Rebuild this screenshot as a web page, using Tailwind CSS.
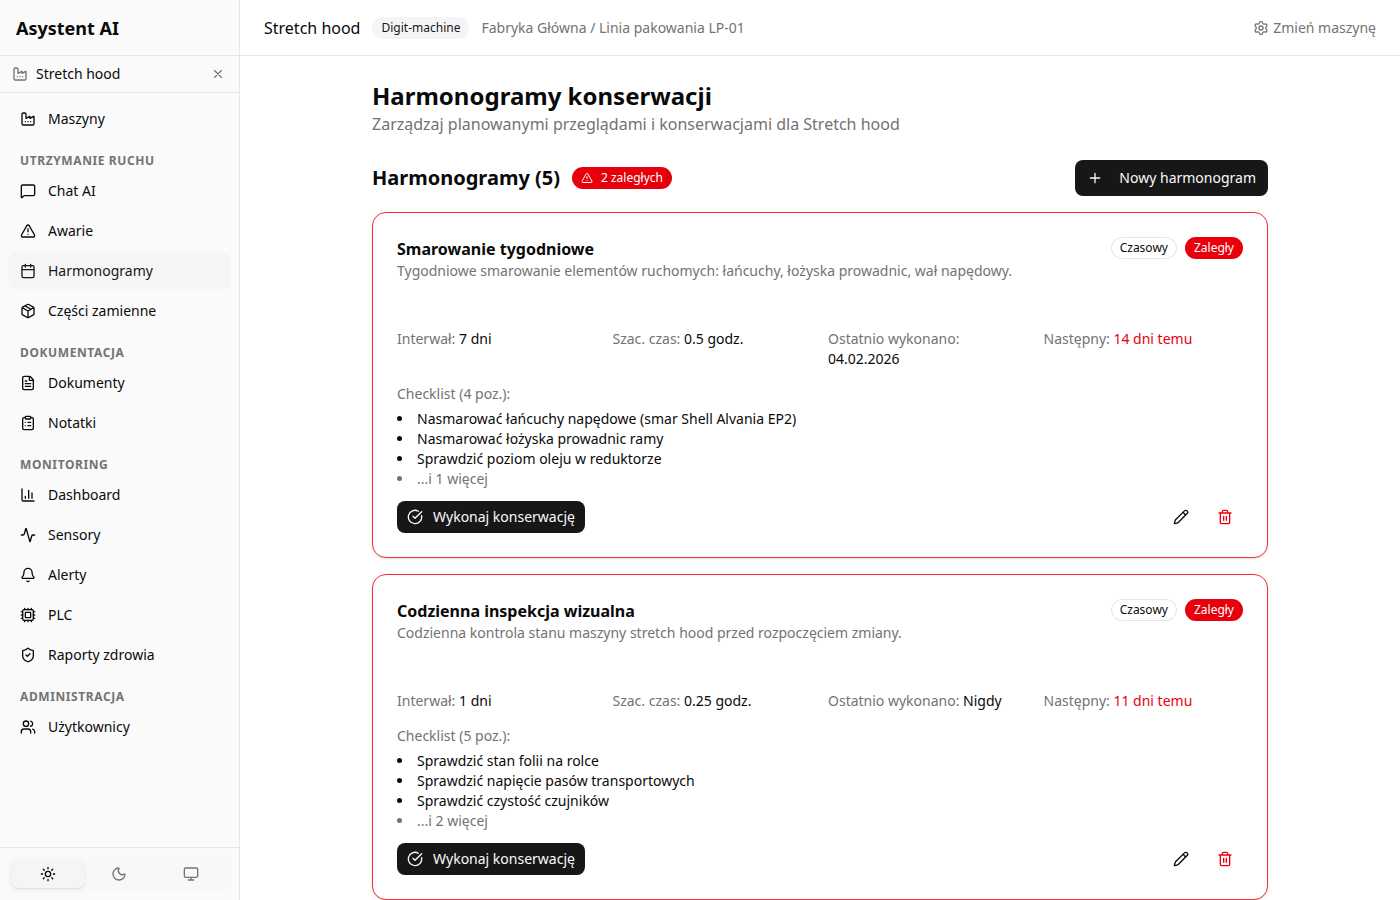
<!DOCTYPE html>
<html lang="pl">
<head>
    <meta charset="UTF-8">
    <meta name="viewport" content="width=device-width, initial-scale=1.0">
    <title>Asystent AI - Harmonogramy</title>
    <script src="https://cdn.jsdelivr.net/npm/@tailwindcss/browser@4"></script>
</head>
<body class="bg-white text-neutral-950 font-['Noto_Sans',sans-serif]">

    <!-- Icon sprite -->
    <svg class="hidden">
        <symbol id="factory" viewBox="0 0 24 24"><path d="M12 16h.01M16 16h.01M8 16h.01M3 19a2 2 0 0 0 2 2h14a2 2 0 0 0 2-2V8.5a.5.5 0 0 0-.769-.422l-4.462 2.844A.5.5 0 0 1 15 10.5v-2a.5.5 0 0 0-.769-.422L9.77 10.922A.5.5 0 0 1 9 10.5V5a2 2 0 0 0-2-2H5a2 2 0 0 0-2 2z"/></symbol>
        <symbol id="x" viewBox="0 0 24 24"><path d="M18 6 6 18M6 6l12 12"/></symbol>
        <symbol id="message" viewBox="0 0 24 24"><path d="M22 17a2 2 0 0 1-2 2H6.828a2 2 0 0 0-1.414.586l-2.202 2.202A.71.71 0 0 1 2 21.286V5a2 2 0 0 1 2-2h16a2 2 0 0 1 2 2z"/></symbol>
        <symbol id="alert" viewBox="0 0 24 24"><path d="m21.73 18-8-14a2 2 0 0 0-3.48 0l-8 14A2 2 0 0 0 4 21h16a2 2 0 0 0 1.73-3M12 9v4M12 17h.01"/></symbol>
        <symbol id="calendar" viewBox="0 0 24 24"><path d="M8 2v4M16 2v4M3 10h18"/><rect width="18" height="18" x="3" y="4" rx="2"/></symbol>
        <symbol id="package" viewBox="0 0 24 24"><path d="M11 21.73a2 2 0 0 0 2 0l7-4A2 2 0 0 0 21 16V8a2 2 0 0 0-1-1.73l-7-4a2 2 0 0 0-2 0l-7 4A2 2 0 0 0 3 8v8a2 2 0 0 0 1 1.73zM12 22V12M3.29 7 12 12l8.71-5M7.5 4.27l9 5.15"/></symbol>
        <symbol id="file" viewBox="0 0 24 24"><path d="M6 22a2 2 0 0 1-2-2V4a2 2 0 0 1 2-2h8a2.4 2.4 0 0 1 1.704.706l3.588 3.588A2.4 2.4 0 0 1 20 8v12a2 2 0 0 1-2 2zM14 2v5a1 1 0 0 0 1 1h5M10 9H8M16 13H8M16 17H8"/></symbol>
        <symbol id="clipboard" viewBox="0 0 24 24"><rect width="8" height="4" x="8" y="2" rx="1"/><path d="M16 4h2a2 2 0 0 1 2 2v14a2 2 0 0 1-2 2H6a2 2 0 0 1-2-2V6a2 2 0 0 1 2-2h2M12 11h4M12 16h4M8 11h.01M8 16h.01"/></symbol>
        <symbol id="chart" viewBox="0 0 24 24"><path d="M3 3v16a2 2 0 0 0 2 2h16M18 17V9M13 17V5M8 17v-3"/></symbol>
        <symbol id="activity" viewBox="0 0 24 24"><path d="M22 12h-2.48a2 2 0 0 0-1.93 1.46l-2.35 8.36a.25.25 0 0 1-.48 0L9.24 2.18a.25.25 0 0 0-.48 0l-2.35 8.36A2 2 0 0 1 4.49 12H2"/></symbol>
        <symbol id="bell" viewBox="0 0 24 24"><path d="M10.268 21a2 2 0 0 0 3.464 0M3.262 15.326A1 1 0 0 0 4 17h16a1 1 0 0 0 .74-1.673C19.41 13.956 18 12.499 18 8A6 6 0 0 0 6 8c0 4.499-1.411 5.956-2.738 7.326"/></symbol>
        <symbol id="cpu" viewBox="0 0 24 24"><path d="M12 20v2M12 2v2M17 20v2M17 2v2M2 12h2M2 17h2M2 7h2M20 12h2M20 17h2M20 7h2M7 20v2M7 2v2"/><rect width="16" height="16" x="4" y="4" rx="2"/><rect width="8" height="8" x="8" y="8" rx="1"/></symbol>
        <symbol id="shield" viewBox="0 0 24 24"><path d="M20 13c0 5-3.5 7.5-7.66 8.95a1 1 0 0 1-.67-.01C7.5 20.5 4 18 4 13V6a1 1 0 0 1 1-1c2 0 4.5-1.2 6.24-2.72a1.17 1.17 0 0 1 1.52 0C14.51 3.81 17 5 19 5a1 1 0 0 1 1 1zM9 12l2 2 4-4"/></symbol>
        <symbol id="users" viewBox="0 0 24 24"><path d="M16 21v-2a4 4 0 0 0-4-4H6a4 4 0 0 0-4 4v2M16 3.128a4 4 0 0 1 0 7.744M22 21v-2a4 4 0 0 0-3-3.87"/><circle cx="9" cy="7" r="4"/></symbol>
        <symbol id="sun" viewBox="0 0 24 24"><circle cx="12" cy="12" r="4"/><path d="M12 2v2M12 20v2M4.93 4.93l1.41 1.41M17.66 17.66l1.41 1.41M2 12h2M20 12h2M6.34 17.66l-1.41 1.41M19.07 4.93l-1.41 1.41"/></symbol>
        <symbol id="moon" viewBox="0 0 24 24"><path d="M20.985 12.486a9 9 0 1 1-9.473-9.472c.405-.022.617.46.402.803a6 6 0 0 0 8.268 8.268c.344-.215.825-.004.803.401"/></symbol>
        <symbol id="monitor" viewBox="0 0 24 24"><rect width="20" height="14" x="2" y="3" rx="2"/><path d="M8 21h8M12 17v4"/></symbol>
        <symbol id="settings" viewBox="0 0 24 24"><path d="M9.671 4.136a2.34 2.34 0 0 1 4.659 0 2.34 2.34 0 0 0 3.319 1.915 2.34 2.34 0 0 1 2.33 4.033 2.34 2.34 0 0 0 0 3.831 2.34 2.34 0 0 1-2.33 4.033 2.34 2.34 0 0 0-3.319 1.915 2.34 2.34 0 0 1-4.659 0 2.34 2.34 0 0 0-3.32-1.915 2.34 2.34 0 0 1-2.33-4.033 2.34 2.34 0 0 0 0-3.831A2.34 2.34 0 0 1 6.35 6.051a2.34 2.34 0 0 0 3.319-1.915"/><circle cx="12" cy="12" r="3"/></symbol>
        <symbol id="plus" viewBox="0 0 24 24"><path d="M5 12h14M12 5v14"/></symbol>
        <symbol id="check" viewBox="0 0 24 24"><path d="M21.801 10A10 10 0 1 1 17 3.335M9 11l3 3L22 4"/></symbol>
        <symbol id="pencil" viewBox="0 0 24 24"><path d="M21.174 6.812a1 1 0 0 0-3.986-3.987L3.842 16.174a2 2 0 0 0-.5.83l-1.321 4.352a.5.5 0 0 0 .623.622l4.353-1.32a2 2 0 0 0 .83-.497zM15 5l4 4"/></symbol>
        <symbol id="trash" viewBox="0 0 24 24"><path d="M10 11v6M14 11v6M19 6v14a2 2 0 0 1-2 2H7a2 2 0 0 1-2-2V6M3 6h18M8 6V4a2 2 0 0 1 2-2h4a2 2 0 0 1 2 2v2"/></symbol>
    </svg>

    <div class="flex h-screen">

        <!-- Sidebar -->
        <aside class="flex flex-col w-60 shrink-0 bg-neutral-50 border-r border-neutral-200">
            <div class="flex items-center h-14 px-4 border-b border-neutral-200">
                <span class="text-lg font-bold">Asystent AI</span>
            </div>
            <div class="flex items-center gap-2 px-3 py-2 border-b border-neutral-200 text-sm">
                <svg class="size-4 fill-none stroke-neutral-500 stroke-2 [stroke-linecap:round] [stroke-linejoin:round]"><use href="#factory"/></svg>
                <span class="flex-1">Stretch hood</span>
                <button class="p-0.5 rounded text-neutral-500 hover:bg-neutral-100" aria-label="Wyczyść wybór maszyny">
                    <svg class="size-3.5 fill-none stroke-current stroke-2 [stroke-linecap:round] [stroke-linejoin:round]"><use href="#x"/></svg>
                </button>
            </div>

            <nav id="nav" class="flex flex-col flex-1 gap-1 p-2 overflow-y-auto text-sm"></nav>

            <!-- Theme switch -->
            <div class="p-2 border-t border-neutral-200">
                <div class="grid grid-cols-3 p-1 rounded-lg bg-neutral-100/30">
                    <button class="flex items-center justify-center h-7 rounded-md bg-neutral-100 shadow-sm" aria-label="Jasny">
                        <svg class="size-4 fill-none stroke-current stroke-2 [stroke-linecap:round] [stroke-linejoin:round]"><use href="#sun"/></svg>
                    </button>
                    <button class="flex items-center justify-center h-7 rounded-md text-neutral-500" aria-label="Ciemny">
                        <svg class="size-4 fill-none stroke-current stroke-2 [stroke-linecap:round] [stroke-linejoin:round]"><use href="#moon"/></svg>
                    </button>
                    <button class="flex items-center justify-center h-7 rounded-md text-neutral-500" aria-label="Systemowy">
                        <svg class="size-4 fill-none stroke-current stroke-2 [stroke-linecap:round] [stroke-linejoin:round]"><use href="#monitor"/></svg>
                    </button>
                </div>
            </div>
        </aside>

        <div class="flex flex-col flex-1 min-w-0">
            <!-- Top bar -->
            <header class="flex items-center shrink-0 gap-3 h-14 px-6 border-b border-neutral-200">
                <span>Stretch hood</span>
                <span class="px-2 py-0.5 rounded-full border border-transparent bg-neutral-100 text-neutral-900 text-xs">Digit-machine</span>
                <span class="text-sm text-neutral-500">Fabryka Główna / Linia pakowania LP-01</span>
                <a href="#" class="flex items-center gap-1 ml-auto text-sm text-neutral-500 hover:text-neutral-950">
                    <svg class="size-4 fill-none stroke-current stroke-2 [stroke-linecap:round] [stroke-linejoin:round]"><use href="#settings"/></svg>
                    Zmień maszynę
                </a>
            </header>

            <main class="flex-1 p-6 pb-0 overflow-y-auto">
                <div class="max-w-4xl mx-auto">
                    <h1 class="text-2xl font-bold">Harmonogramy konserwacji</h1>
                    <p class="text-neutral-500">Zarządzaj planowanymi przeglądami i konserwacjami dla Stretch hood</p>

                    <div class="flex items-center gap-3 mt-6 mb-4">
                        <h2 class="text-xl font-bold">Harmonogramy (5)</h2>
                        <span class="flex items-center gap-2 px-2 py-0.5 rounded-full border border-transparent bg-red-600 text-white text-xs">
                            <svg class="size-3 fill-none stroke-current stroke-2 [stroke-linecap:round] [stroke-linejoin:round]"><use href="#alert"/></svg>
                            2 zaległych
                        </span>
                        <button class="flex items-center gap-4 h-9 px-3 ml-auto rounded-lg bg-neutral-900 text-neutral-50 text-sm">
                            <svg class="size-4 fill-none stroke-current stroke-2 [stroke-linecap:round] [stroke-linejoin:round]"><use href="#plus"/></svg>
                            Nowy harmonogram
                        </button>
                    </div>

                    <div id="schedules" class="flex flex-col gap-4"></div>
                </div>
            </main>
        </div>
    </div>

    <script>
        const navigation = [
            { items: [['factory', 'Maszyny']] },
            { title: 'Utrzymanie ruchu', items: [['message', 'Chat AI'], ['alert', 'Awarie'], ['calendar', 'Harmonogramy'], ['package', 'Części zamienne']] },
            { title: 'Dokumentacja', items: [['file', 'Dokumenty'], ['clipboard', 'Notatki']] },
            { title: 'Monitoring', items: [['chart', 'Dashboard'], ['activity', 'Sensory'], ['bell', 'Alerty'], ['cpu', 'PLC'], ['shield', 'Raporty zdrowia']] },
            { title: 'Administracja', items: [['users', 'Użytkownicy']] }
        ];

        const schedules = [
            {
                name: 'Smarowanie tygodniowe',
                description: 'Tygodniowe smarowanie elementów ruchomych: łańcuchy, łożyska prowadnic, wał napędowy.',
                interval: '7 dni', hours: '0.5 godz.', last: '04.02.2026', next: '14 dni temu',
                total: 4,
                checklist: ['Nasmarować łańcuchy napędowe (smar Shell Alvania EP2)', 'Nasmarować łożyska prowadnic ramy', 'Sprawdzić poziom oleju w reduktorze']
            },
            {
                name: 'Codzienna inspekcja wizualna',
                description: 'Codzienna kontrola stanu maszyny stretch hood przed rozpoczęciem zmiany.',
                interval: '1 dni', hours: '0.25 godz.', last: 'Nigdy', next: '11 dni temu',
                total: 5,
                checklist: ['Sprawdzić stan folii na rolce', 'Sprawdzić napięcie pasów transportowych', 'Sprawdzić czystość czujników']
            }
        ];

        function icon(name) {
            return `<svg class="size-4 shrink-0 fill-none stroke-current stroke-2 [stroke-linecap:round] [stroke-linejoin:round]"><use href="#${name}"/></svg>`;
        }

        // Sidebar links
        document.getElementById('nav').innerHTML = navigation.map(group => {
            const title = group.title
                ? `<div class="px-3 pt-3 text-xs font-bold uppercase tracking-wider text-neutral-500">${group.title}</div>`
                : '';
            return title + group.items.map(([name, label]) => `
                <a href="#" class="flex items-center gap-3 px-3 py-2 rounded-lg ${label === 'Harmonogramy' ? 'bg-neutral-100 text-neutral-900' : 'hover:bg-neutral-100'}">${icon(name)}${label}</a>
            `).join('');
        }).join('');

        // Schedule cards
        document.getElementById('schedules').innerHTML = schedules.map(s => `
            <article class="p-6 rounded-[14px] border border-red-500 bg-white shadow-sm">
                <div class="flex items-start justify-between gap-4">
                    <div>
                        <h3 class="font-bold">${s.name}</h3>
                        <p class="text-sm text-neutral-500">${s.description}</p>
                    </div>
                    <div class="flex gap-2 text-xs">
                        <span class="px-2 py-0.5 rounded-full border border-neutral-200">Czasowy</span>
                        <span class="px-2 py-0.5 rounded-full border border-transparent bg-red-600 text-white">Zaległy</span>
                    </div>
                </div>
                <div class="grid grid-cols-4 gap-4 mt-12 text-sm">
                    <div><span class="text-neutral-500">Interwał:</span> ${s.interval}</div>
                    <div><span class="text-neutral-500">Szac. czas:</span> ${s.hours}</div>
                    <div><span class="text-neutral-500">Ostatnio wykonano:</span> ${s.last}</div>
                    <div><span class="text-neutral-500">Następny:</span> <span class="text-red-600">${s.next}</span></div>
                </div>
                <div class="mt-3">
                    <span class="text-sm text-neutral-500">Checklist (${s.total} poz.):</span>
                    <ul class="mt-1 list-disc list-inside text-sm">
                        ${s.checklist.map(item => `<li>${item}</li>`).join('')}
                        <li class="text-neutral-500">...i ${s.total - s.checklist.length} więcej</li>
                    </ul>
                </div>
                <div class="flex items-center gap-2 mt-3">
                    <button class="flex items-center gap-2.5 h-8 px-2.5 mr-auto rounded-lg bg-neutral-900 text-neutral-50 text-sm">${icon('check')}Wykonaj konserwację</button>
                    <button class="flex items-center h-8 px-2.5 rounded-lg hover:bg-neutral-100" aria-label="Edytuj">${icon('pencil')}</button>
                    <button class="flex items-center h-8 px-2.5 rounded-lg text-red-600 hover:bg-neutral-100" aria-label="Usuń">${icon('trash')}</button>
                </div>
            </article>
        `).join('');
    </script>

</body>
</html>
